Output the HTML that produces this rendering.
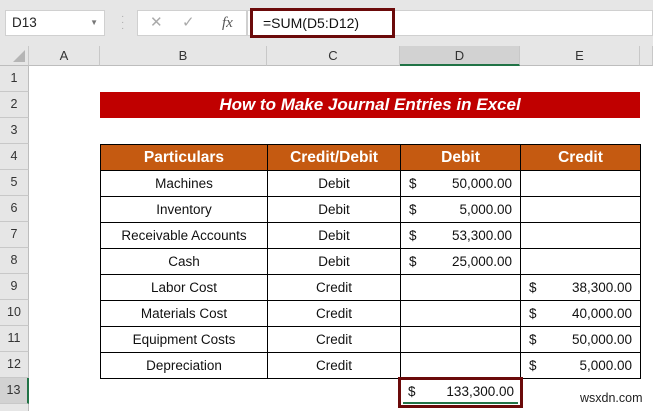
<!DOCTYPE html>
<html><head><meta charset="utf-8"><style>
*{margin:0;padding:0;box-sizing:border-box}
html,body{width:653px;height:411px;overflow:hidden}
body{background:#fff;font-family:"Liberation Sans",Arial,sans-serif;position:relative}
.a{position:absolute}
.top{left:0;top:0;width:653px;height:46px;background:#e6e6e6}
.colh{top:46px;height:20px;background:#e6e6e6;border-right:1px solid #c8c8c8;border-bottom:1px solid #bdbdbd;font-size:13px;color:#333;text-align:center;line-height:20px}
.rowh{left:0;width:29px;height:26px;background:#e6e6e6;border-bottom:1px solid #c8c8c8;border-right:1px solid #bdbdbd;font-size:12.5px;color:#333;text-align:center;line-height:25px}
.c{height:27px;font-size:13.5px;color:#111;line-height:25px;text-align:center;border:1px solid #000}
.h{background:#c55a11;color:#fff;font-weight:bold;font-size:15.5px}
.d{text-align:right;padding-right:8px}
.d span{position:absolute;left:8px}
</style></head><body>
<div class="a top"></div>
<div class="a" style="left:5px;top:10px;width:100px;height:26px;background:#fff;border:1px solid #d0d0d0;font-size:13.5px;line-height:24px;padding-left:6px;color:#222">D13<span style="position:absolute;right:6px;top:0;font-size:8px;color:#777">▼</span></div>
<div class="a" style="left:121px;top:14px;color:#aaa;font-size:10px;line-height:6px">·<br>·<br>·</div>
<div class="a" style="left:137px;top:10px;width:110px;height:26px;background:#fff;border:1px solid #d0d0d0;font-size:15px;line-height:24px;color:#aaa"><span style="position:absolute;left:12px">✕</span><span style="position:absolute;left:44px">✓</span><span style="position:absolute;left:84px;color:#555;font-style:italic;font-family:'Liberation Serif',serif">fx</span></div>
<div class="a" style="left:247px;top:10px;width:406px;height:26px;background:#fff;border:1px solid #d0d0d0"></div>
<div class="a" style="left:250px;top:8px;width:145px;height:30px;border:3px solid #6b0a0a;font-size:14px;line-height:24px;padding-left:10px;color:#111;background:#fff">=SUM(D5:D12)</div>
<div class="a colh" style="left:0;width:29px"><span style="position:absolute;right:3px;bottom:3px;width:0;height:0;border-left:12px solid transparent;border-bottom:12px solid #b5b5b5"></span></div>
<div class="a colh" style="left:29px;width:71px">A</div>
<div class="a colh" style="left:100px;width:167px">B</div>
<div class="a colh" style="left:267px;width:133px">C</div>
<div class="a colh" style="left:400px;width:120px;background:#d2d2d2;border-bottom:2px solid #217346">D</div>
<div class="a colh" style="left:520px;width:120px">E</div>
<div class="a colh" style="left:640px;width:13px"></div>
<div class="a rowh" style="top:66px">1</div><div class="a rowh" style="top:92px">2</div><div class="a rowh" style="top:118px">3</div><div class="a rowh" style="top:144px">4</div><div class="a rowh" style="top:170px">5</div><div class="a rowh" style="top:196px">6</div><div class="a rowh" style="top:222px">7</div><div class="a rowh" style="top:248px">8</div><div class="a rowh" style="top:274px">9</div><div class="a rowh" style="top:300px">10</div><div class="a rowh" style="top:326px">11</div><div class="a rowh" style="top:352px">12</div><div class="a rowh" style="top:378px;background:#d2d2d2;border-right:2px solid #217346">13</div><div class="a rowh" style="top:404px"></div>
<div class="a" style="left:100px;top:92px;width:540px;height:26px;background:#c00000;color:#fff;font-weight:bold;font-style:italic;font-size:17px;text-align:center;line-height:26px">How to Make Journal Entries in Excel</div>

<div class="a c h" style="left:100px;top:144px;width:168px">Particulars</div>
<div class="a c h" style="left:267px;top:144px;width:134px">Credit/Debit</div>
<div class="a c h" style="left:400px;top:144px;width:121px">Debit</div>
<div class="a c h" style="left:520px;top:144px;width:121px">Credit</div>

<div class="a c" style="left:100px;top:170px;width:168px">Machines</div><div class="a c" style="left:267px;top:170px;width:134px">Debit</div><div class="a c d" style="left:400px;top:170px;width:121px"><span>$</span>50,000.00</div><div class="a c" style="left:520px;top:170px;width:121px"></div>
<div class="a c" style="left:100px;top:196px;width:168px">Inventory</div><div class="a c" style="left:267px;top:196px;width:134px">Debit</div><div class="a c d" style="left:400px;top:196px;width:121px"><span>$</span>5,000.00</div><div class="a c" style="left:520px;top:196px;width:121px"></div>
<div class="a c" style="left:100px;top:222px;width:168px">Receivable Accounts</div><div class="a c" style="left:267px;top:222px;width:134px">Debit</div><div class="a c d" style="left:400px;top:222px;width:121px"><span>$</span>53,300.00</div><div class="a c" style="left:520px;top:222px;width:121px"></div>
<div class="a c" style="left:100px;top:248px;width:168px">Cash</div><div class="a c" style="left:267px;top:248px;width:134px">Debit</div><div class="a c d" style="left:400px;top:248px;width:121px"><span>$</span>25,000.00</div><div class="a c" style="left:520px;top:248px;width:121px"></div>
<div class="a c" style="left:100px;top:274px;width:168px">Labor Cost</div><div class="a c" style="left:267px;top:274px;width:134px">Credit</div><div class="a c" style="left:400px;top:274px;width:121px"></div><div class="a c d" style="left:520px;top:274px;width:121px"><span>$</span>38,300.00</div>
<div class="a c" style="left:100px;top:300px;width:168px">Materials Cost</div><div class="a c" style="left:267px;top:300px;width:134px">Credit</div><div class="a c" style="left:400px;top:300px;width:121px"></div><div class="a c d" style="left:520px;top:300px;width:121px"><span>$</span>40,000.00</div>
<div class="a c" style="left:100px;top:326px;width:168px">Equipment Costs</div><div class="a c" style="left:267px;top:326px;width:134px">Credit</div><div class="a c" style="left:400px;top:326px;width:121px"></div><div class="a c d" style="left:520px;top:326px;width:121px"><span>$</span>50,000.00</div>
<div class="a c" style="left:100px;top:352px;width:168px">Depreciation</div><div class="a c" style="left:267px;top:352px;width:134px">Credit</div><div class="a c" style="left:400px;top:352px;width:121px"></div><div class="a c d" style="left:520px;top:352px;width:121px"><span>$</span>5,000.00</div>

<div class="a" style="left:398px;top:377px;width:125px;height:31px;border:3px solid #6b0a0a;font-size:13.5px;line-height:24px;text-align:right;padding-right:6px;color:#111;background:#fff"><span style="position:absolute;left:7px">$</span>133,300.00<div style="position:absolute;left:2px;right:2px;bottom:1px;height:2px;background:#217346"></div></div>
<div class="a" style="left:580px;top:391px;font-size:12.5px;color:#222">wsxdn.com</div>
</body></html>
